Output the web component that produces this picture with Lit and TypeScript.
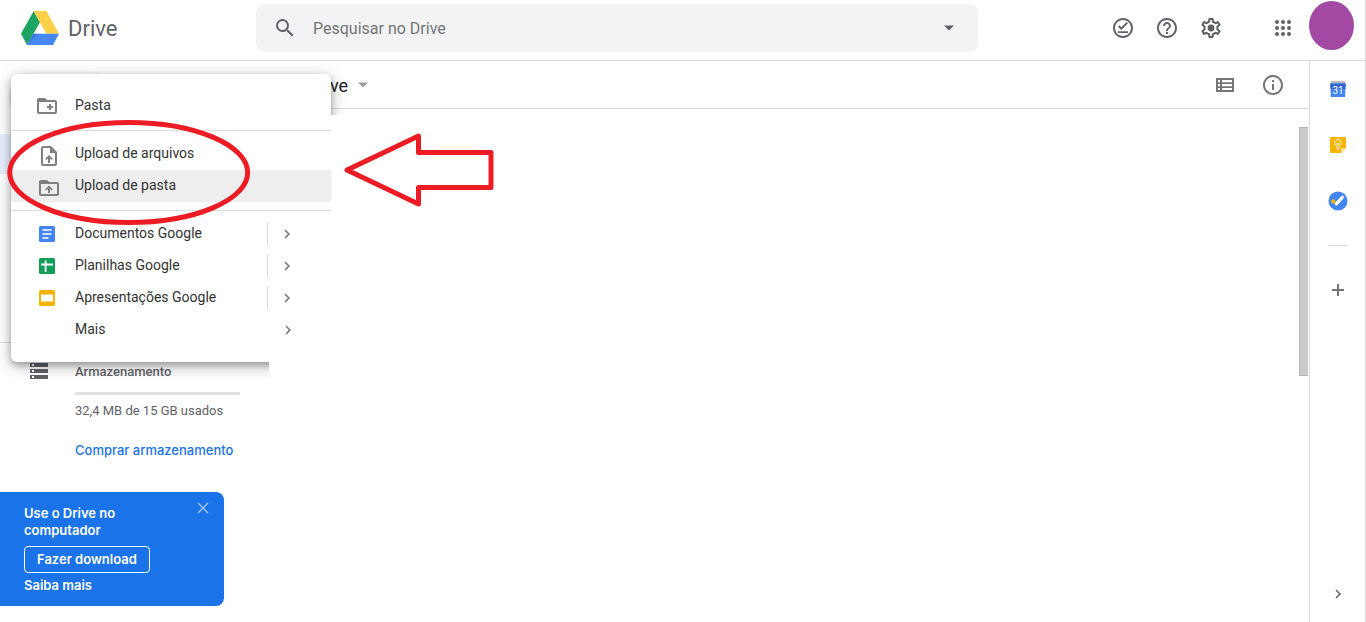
import { LitElement, html, css, svg, nothing, type TemplateResult } from "lit";
import { customElement } from "lit/decorators.js";

/* ---------- icons ---------- */

const icon = (body: unknown, size = 24, box = "0 0 24 24") => html`<svg
  width=${size}
  height=${size}
  viewBox=${box}
  fill="currentColor"
  aria-hidden="true"
>${body}</svg>`;

const chevron = icon(svg`<path d="M8.6 16.6 13.2 12 8.6 7.4 10 6l6 6-6 6z"/>`, 18);
const caret = icon(svg`<path d="M7 9.5h10l-5 5z"/>`);
const searchIcon = icon(svg`<path d="M15.5 14h-.79l-.28-.27A6.47 6.47 0 0 0 16 9.5 6.5 6.5 0 1 0 9.5 16c1.61 0 3.09-.59 4.23-1.57l.27.28v.79l5 4.99L20.49 19l-4.99-5zm-6 0C7.01 14 5 11.99 5 9.5S7.01 5 9.5 5 14 7.01 14 9.5 11.99 14 9.5 14z"/>`);
const offlineIcon = icon(svg`<path d="M12 2C6.5 2 2 6.5 2 12s4.5 10 10 10 10-4.5 10-10S17.5 2 12 2zm0 18c-4.41 0-8-3.59-8-8s3.59-8 8-8 8 3.59 8 8-3.59 8-8 8zM7 15.2h10v1.9H7zM10.3 14 7 10.7l1.4-1.4 1.9 1.9L15.6 6 17 7.3z"/>`);
const helpIcon = icon(svg`<path d="M11 18h2v-2h-2v2zm1-16C6.48 2 2 6.48 2 12s4.48 10 10 10 10-4.48 10-10S17.52 2 12 2zm0 18c-4.41 0-8-3.59-8-8s3.59-8 8-8 8 3.59 8 8-3.59 8-8 8zm0-14c-2.21 0-4 1.79-4 4h2c0-1.1.9-2 2-2s2 .9 2 2c0 2-3 1.75-3 5h2c0-2.25 3-2.5 3-5 0-2.21-1.79-4-4-4z"/>`);
const gearIcon = icon(svg`<path d="M19.43 12.98c.04-.32.07-.64.07-.98s-.03-.66-.07-.98l2.11-1.65c.19-.15.24-.42.12-.64l-2-3.46c-.12-.22-.39-.3-.61-.22l-2.49 1c-.52-.4-1.08-.73-1.69-.98l-.38-2.65A.49.49 0 0 0 14 2h-4c-.25 0-.46.18-.49.42l-.38 2.65c-.61.25-1.17.59-1.69.98l-2.49-1c-.23-.09-.49 0-.61.22l-2 3.46c-.13.22-.07.49.12.64l2.11 1.65c-.04.32-.07.65-.07.98s.03.66.07.98l-2.11 1.65c-.19.15-.24.42-.12.64l2 3.46c.12.22.39.3.61.22l2.49-1c.52.4 1.08.73 1.69.98l.38 2.65c.03.24.24.42.49.42h4c.25 0 .46-.18.49-.42l.38-2.65c.61-.25 1.17-.59 1.69-.98l2.49 1c.23.09.49 0 .61-.22l2-3.46c.12-.22.07-.49-.12-.64l-2.11-1.65zm-1.98-1.71c.04.31.05.52.05.73s-.02.43-.05.73l-.14 1.13.89.7 1.08.84-.7 1.21-1.27-.51-1.04-.42-.9.68c-.43.32-.84.56-1.25.73l-1.06.43-.16 1.13-.2 1.35h-1.4l-.35-2.48-1.06-.43c-.43-.18-.83-.41-1.23-.71l-.91-.7-1.06.43-1.27.51-.7-1.21 1.97-1.54-.14-1.13c-.03-.31-.05-.54-.05-.74s.02-.43.05-.73l.14-1.13-1.97-1.54.7-1.21 1.27.51 1.04.42.9-.68c.43-.32.84-.56 1.25-.73l1.06-.43.35-2.48h1.39l.35 2.48 1.06.43c.43.18.83.41 1.23.71l.91.7 1.06-.43 1.27-.51.7 1.21-1.96 1.55.15 1.13z"/><circle cx="12" cy="12" r="3.4"/>`);
const appsIcon = icon(
  [6, 12, 18].map((y) => [6, 12, 18].map((x) => svg`<circle cx=${x} cy=${y} r="2"/>`))
);
const listIcon = icon(svg`<path fill-rule="evenodd" d="M3 5h18v14H3zM5 7v2.3h2V7zm4 0v2.3h10V7zM5 11v2.2h2V11zm4 0v2.2h10V11zM5 15v2h2v-2zm4 0v2h10v-2z"/>`);
const infoIcon = icon(svg`<path d="M11 7h2v2h-2zm0 4h2v6h-2zm1-9C6.48 2 2 6.48 2 12s4.48 10 10 10 10-4.48 10-10S17.52 2 12 2zm0 18c-4.41 0-8-3.59-8-8s3.59-8 8-8 8 3.59 8 8-3.59 8-8 8z"/>`);
const plusIcon = icon(svg`<path d="M11 6h2v5h5v2h-5v5h-2v-5H6v-2h5z"/>`);
const closeIcon = icon(svg`<path d="M1 1 11 11M11 1 1 11" fill="none" stroke="currentColor" stroke-width="1.4"/>`, 12, "0 0 12 12");

const folderOutline = "M20 6h-8l-2-2H4c-1.11 0-1.99.89-1.99 2L2 18c0 1.11.89 2 2 2h16c1.11 0 2-.89 2-2V8c0-1.11-.89-2-2-2zm0 12H4V8h16v10z";
const newFolderIcon = icon(svg`<path d=${folderOutline}/><path d="M14 10h2v2h2v2h-2v2h-2v-2h-2v-2h2z"/>`);
const folderUpIcon = icon(svg`<path d=${folderOutline}/><path d="M8.2 13.2 12 9.4l3.8 3.8-1.2 1.2L13 12.8V17h-2v-4.200l-1.6 1.6z"/>`);
const fileUpIcon = icon(svg`<path d="M14 2H6c-1.1 0-2 .9-2 2v16c0 1.1.9 2 2 2h12c1.1 0 2-.9 2-2V8zm4 18H6V4h7v5h5z"/><path d="M8.200 14.8 12 11l3.8 3.8-1.2 1.2L13 14.4V19h-2v-4.6L9.4 16z"/>`);

const docsIcon = icon(svg`<rect width="16" height="16" rx="1.5" fill="#4285f4"/><path d="M3.5 4h9M3.5 8h9M3.5 12h6" stroke="#fff" stroke-width="1.7"/>`, 16, "0 0 16 16");
const sheetsIcon = icon(svg`<rect width="16" height="16" rx="1.5" fill="#0f9d58"/><path d="M2 6.5h12M6.6 2.5v11.5" stroke="#fff" stroke-width="1.8"/>`, 16, "0 0 16 16");
const slidesIcon = icon(svg`<rect width="16" height="16" rx="1.5" fill="#f4b400"/><path d="M2 4.5h12v7H2z" fill="#fff"/>`, 16, "0 0 16 16");

const storageIcon = html`<svg width="18" height="16" viewBox="0 0 18 16" aria-hidden="true">
  <path fill="#5f6368" d="M0 0h18v4H0zM0 6h18v4H0zM0 12h18v4H0z"/>
  <path fill="#fff" d="M2 1h2v2H2zM2 7h2v2H2zM2 13h2v2H2z"/>
</svg>`;

const driveLogo = html`<svg width="38" height="34" viewBox="63 33 114 102" aria-hidden="true">
  <path fill="#1da462" d="M101 33 120 67 81 135 63 101z"/>
  <path fill="#ffcf48" d="M101 33h38l38 68h-38z"/>
  <path fill="#4688f4" d="M100 101h77l-18 34H81z"/>
  <path fill="#2a5fc9" opacity=".5" d="M100 101h12L81 135z"/>
</svg>`;

const calendarIcon = icon(svg`
  <path fill="#bdbdbd" d="M1 0h14v3H1z"/>
  <path fill="#4285f4" d="M.5 2.5h15L15.2 16H.8z"/>
  <path fill="#3367d6" d="M0 2.5h16L15.3 8H.7z"/>
  <text x="8" y="13" text-anchor="middle" font-family="Roboto, sans-serif" font-size="10" fill="#fff">31</text>`, 16, "0 0 16 16");
const keepIcon = icon(svg`
  <path fill="#f5b400" d="M1 0h14q1 0 1 1v10l-5 5H1q-1 0-1-1V1q0-1 1-1z"/>
  <path fill="#fde08a" d="M16 11h-5v5z"/>
  <path fill="none" stroke="#fff" stroke-width=".9" d="M6.5 10V8.8a3.3 3.3 0 1 1 3 0V10zM6.5 12h3M7.2 8V6.3l.8.6.8-.6V8"/>`, 16, "0 0 16 16");
const tasksIcon = icon(svg`
  <circle cx="10" cy="10" r="9.5" fill="#4285f4"/>
  <path d="m8.3 12.8 6-6.5" stroke="#fff" stroke-width="3.2" stroke-linecap="round"/>
  <circle cx="5.3" cy="10.4" r="2.2" fill="#f4b400"/>`, 20, "0 0 20 20");

/* ---------- data ---------- */

interface MenuItem {
  label: string;
  glyph?: TemplateResult;
  indent?: boolean;
  active?: boolean;
  submenu?: boolean;
  split?: boolean;
}

const MENU: MenuItem[][] = [
  [{ label: "Pasta", glyph: newFolderIcon }],
  [
    { label: "Upload de arquivos", glyph: fileUpIcon, indent: true },
    { label: "Upload de pasta", glyph: folderUpIcon, indent: true, active: true },
  ],
  [
    { label: "Documentos Google", glyph: docsIcon, submenu: true, split: true },
    { label: "Planilhas Google", glyph: sheetsIcon, submenu: true, split: true },
    { label: "Apresentações Google", glyph: slidesIcon, submenu: true, split: true },
    { label: "Mais", submenu: true },
  ],
];

const button = css`
  button {
    display: grid;
    place-items: center;
    margin: 0;
    padding: 0;
    border: 0;
    background: none;
    color: inherit;
    font: inherit;
    cursor: pointer;
  }
  svg {
    display: block;
  }
`;

/* ---------- header ---------- */

@customElement("drive-header")
class DriveHeader extends LitElement {
  static styles = [
    button,
    css`
      :host {
        display: flex;
        align-items: flex-start;
        height: 60px;
        border-bottom: 1px solid #dadce0;
        color: #5f6368;
      }
      .brand {
        display: flex;
        align-items: center;
        gap: 9px;
        flex: 0 0 235px;
        padding-left: 21px;
        height: 56px;
        color: #5f6368;
        font: 22px/28px "Google Sans", Roboto, sans-serif;
        text-decoration: none;
      }
      .brand span {
        padding-top: 2px;
      }
      .search {
        display: flex;
        align-items: center;
        flex: 0 1 722px;
        height: 48px;
        margin-top: 4px;
        border-radius: 8px;
        background: #f1f3f4;
      }
      .search button {
        flex: 0 0 57px;
        height: 48px;
      }
      .search .options {
        flex-basis: 58px;
      }
      .search input {
        flex: 1;
        min-width: 0;
        padding: 2px 0 0;
        border: 0;
        outline: 0;
        background: none;
        color: #202124;
        font: 16px/24px "Google Sans", Roboto, sans-serif;
      }
      .search input::placeholder {
        color: #757575;
        opacity: 1;
      }
      .actions {
        display: flex;
        align-items: center;
        margin-left: auto;
        height: 56px;
      }
      .actions button {
        width: 44px;
        height: 44px;
      }
      .actions .apps {
        margin-left: 28px;
      }
      .actions .avatar {
        width: 45px;
        height: 49px;
        margin: 0 11px 5px 4px;
        border-radius: 50%;
        background: #a349a4;
      }
    `,
  ];

  render() {
    return html`
      <a class="brand" href="#">${driveLogo}<span>Drive</span></a>
      <form class="search" role="search">
        <button type="button" aria-label="Pesquisar">${searchIcon}</button>
        <input type="text" aria-label="Pesquisar no Drive" placeholder="Pesquisar no Drive" />
        <button class="options" type="button" aria-label="Opções de pesquisa">${caret}</button>
      </form>
      <div class="actions">
        <button aria-label="Pronto para off-line">${offlineIcon}</button>
        <button aria-label="Suporte">${helpIcon}</button>
        <button aria-label="Configurações">${gearIcon}</button>
        <button class="apps" aria-label="Google Apps">${appsIcon}</button>
        <button class="avatar" aria-label="Conta"></button>
      </div>
    `;
  }
}

/* ---------- left navigation ---------- */

@customElement("drive-nav")
class DriveNav extends LitElement {
  static styles = [
    button,
    css`
      :host {
        display: flex;
        flex-direction: column;
        color: #5f6368;
        font: 13px/16px Roboto, sans-serif;
      }
      .new {
        width: 104px;
        height: 48px;
        margin: 12px 0 13px 11px;
        border-radius: 24px;
        background: #fff;
        box-shadow: 0 1px 3px rgba(60, 64, 67, 0.4);
      }
      .selected {
        height: 40px;
        margin: 0 16px 168px 0;
        border-radius: 0 20px 20px 0;
        background: #e8f0fe;
      }
      .storage {
        display: grid;
        grid-template-columns: 45px 1fr;
        padding: 20px 16px 20px 30px;
        border-top: 1px solid #dadce0;
      }
      .storage h2 {
        margin: 0;
        font: 500 13px/18px Roboto, sans-serif;
      }
      .details {
        grid-column: 2;
      }
      .bar {
        height: 3px;
        margin: 11px 0 8px;
        background: #e0e0e0;
      }
      .details p {
        margin: 0 0 23px;
      }
      .details a {
        color: #1a73e8;
        font: 500 13px/16px "Google Sans", Inter, sans-serif;
        text-decoration: none;
      }
      .promo {
        display: flex;
        justify-content: space-between;
        width: 185px;
        margin: auto 0 16px;
        padding: 13px 15px 12px 24px;
        border-radius: 0 8px 8px 0;
        background: #1a73e8;
        color: #fff;
        font: 600 13px/17px "Google Sans", Inter, sans-serif;
      }
      .promo p {
        margin: 0 0 7px;
      }
      .promo .download {
        height: 27px;
        margin-bottom: 4px;
        padding: 0 12px;
        border: 1px solid #fff;
        border-radius: 4px;
      }
      .promo a {
        color: #fff;
        text-decoration: none;
      }
      .promo .close {
        width: 12px;
        height: 12px;
        margin-top: -3px;
        color: #a3c7f7;
      }
    `,
  ];

  render() {
    return html`
      <button class="new" aria-label="Novo"></button>
      <div class="selected"></div>
      <section class="storage">
        ${storageIcon}
        <h2>Armazenamento</h2>
        <div class="details">
          <div class="bar"></div>
          <p>32,4 MB de 15 GB usados</p>
          <a href="#">Comprar armazenamento</a>
        </div>
      </section>
      <aside class="promo">
        <div>
          <p>Use o Drive no<br />computador</p>
          <button class="download">Fazer download</button>
          <a href="#">Saiba mais</a>
        </div>
        <button class="close" aria-label="Fechar">${closeIcon}</button>
      </aside>
    `;
  }
}

/* ---------- "new" menu ---------- */

@customElement("new-menu")
class NewMenu extends LitElement {
  static styles = [
    button,
    css`
      :host {
        display: block;
        clip-path: polygon(-11px -13px, 332px -13px, 332px 0, 340px 0, 340px 41px, 320px 41px, 320px 284px, 258px 284px, 258px 306px, -11px 306px);
      }
      .menu {
        padding: 16px 0;
        border-radius: 6px;
        background: #fff;
        box-shadow: 0 4px 16px rgba(0, 0, 0, 0.28), 0 3px 6px rgba(0, 0, 0, 0.24);
        color: #333;
        font: 14px/30px Roboto, sans-serif;
      }
      hr {
        height: 1px;
        margin: 8px 0 7px;
        border: 0;
        background: #dadce0;
      }
      .item {
        display: grid;
        grid-template-columns: 24px 208px 40px;
        align-items: center;
        justify-content: start;
        justify-items: start;
        width: 100%;
        height: 32px;
        padding-left: 24px;
        text-align: left;
      }
      .item.active {
        background: #eee;
      }
      .glyph {
        display: grid;
        place-items: center;
        width: 24px;
        color: #808080;
      }
      .glyph.indent {
        padding: 4px 0 0 2px;
      }
      .label {
        padding: 0 0 2px 16px;
      }
      .more {
        display: grid;
        place-items: center;
        width: 40px;
        height: 24px;
        border-left: 1px solid transparent;
        color: #757575;
      }
      .more.split {
        width: 38px;
        border-color: #e0e0e0;
      }
    `,
  ];

  private item(entry: MenuItem) {
    return html`<button class="item ${entry.active ? "active" : ""}" role="menuitem">
      <span class="glyph ${entry.indent ? "indent" : ""}">${entry.glyph ?? nothing}</span>
      <span class="label">${entry.label}</span>
      ${entry.submenu
        ? html`<span class="more ${entry.split ? "split" : ""}">${chevron}</span>`
        : nothing}
    </button>`;
  }

  render() {
    return html`<div class="menu" role="menu">
      ${MENU.map((group, i) => html`${i ? html`<hr />` : nothing}${group.map((e) => this.item(e))}`)}
    </div>`;
  }
}

/* ---------- add-on panel ---------- */

@customElement("side-panel")
class SidePanel extends LitElement {
  static styles = [
    button,
    css`
      :host {
        display: flex;
        flex-direction: column;
        align-items: center;
        border-left: 1px solid #dadce0;
        color: #757575;
      }
      button {
        width: 56px;
        height: 56px;
      }
      hr {
        width: 20px;
        height: 1px;
        margin: 16px 0;
        border: 0;
        background: #dadce0;
      }
      .collapse {
        margin-top: auto;
        color: #5f6368;
      }
    `,
  ];

  render() {
    return html`
      <button aria-label="Agenda">${calendarIcon}</button>
      <button aria-label="Keep">${keepIcon}</button>
      <button aria-label="Tarefas">${tasksIcon}</button>
      <hr />
      <button aria-label="Instalar complementos">${plusIcon}</button>
      <button class="collapse" aria-label="Ocultar painel lateral">${chevron}</button>
    `;
  }
}

/* ---------- page ---------- */

@customElement("app-root")
class AppRoot extends LitElement {
  static styles = [
    button,
    css`
      :host {
        position: relative;
        display: grid;
        grid-template: auto 1fr / 256px 1fr 56px;
        min-height: 100vh;
        box-sizing: border-box;
        border-right: 1px solid #dadce0;
        background: #fff;
        overflow: hidden;
      }
      drive-header {
        grid-column: 1 / -1;
      }
      main {
        display: flex;
        flex-direction: column;
        min-width: 0;
      }
      .toolbar {
        display: flex;
        align-items: center;
        height: 47px;
        padding: 0 12px;
        border-bottom: 1px solid #dadce0;
        color: #757575;
      }
      .toolbar button {
        width: 48px;
        height: 47px;
      }
      .toolbar .crumb {
        display: flex;
        width: auto;
        gap: 3px;
        align-items: center;
        margin-right: auto;
        color: #202124;
        font: 18px/24px "Google Sans", Roboto, sans-serif;
      }
      .crumb span {
        padding-top: 2px;
      }
      .crumb svg {
        color: #9a9da1;
      }
      .files {
        display: flex;
        justify-content: flex-end;
        flex: 1;
        padding: 18px 1px 0 0;
      }
      .thumb {
        box-sizing: border-box;
        width: 9px;
        height: 249px;
        border: 1px solid #b5b5b5;
        border-right: 0;
        background: #cbcbcb;
      }
      new-menu {
        position: absolute;
        top: 74px;
        left: 11px;
        width: 320px;
      }
      .marks {
        position: absolute;
        top: 0;
        left: 0;
        pointer-events: none;
      }
    `,
  ];

  render() {
    return html`
      <drive-header></drive-header>
      <drive-nav></drive-nav>
      <main>
        <div class="toolbar">
          <button class="crumb"><span>Meu Drive</span>${caret}</button>
          <button aria-label="Visualização em lista">${listIcon}</button>
          <button aria-label="Ver detalhes">${infoIcon}</button>
        </div>
        <div class="files"><div class="thumb"></div></div>
      </main>
      <side-panel></side-panel>
      <new-menu></new-menu>
      <svg class="marks" width="500" height="240" fill="none" stroke="#ed1c24" stroke-width="5" aria-hidden="true">
        <ellipse cx="128.7" cy="172.5" rx="119" ry="50" />
        <path stroke-linejoin="round" d="M347 170 418.5 136V152.5H491V187.5H418.5V204z" />
      </svg>
    `;
  }
}
